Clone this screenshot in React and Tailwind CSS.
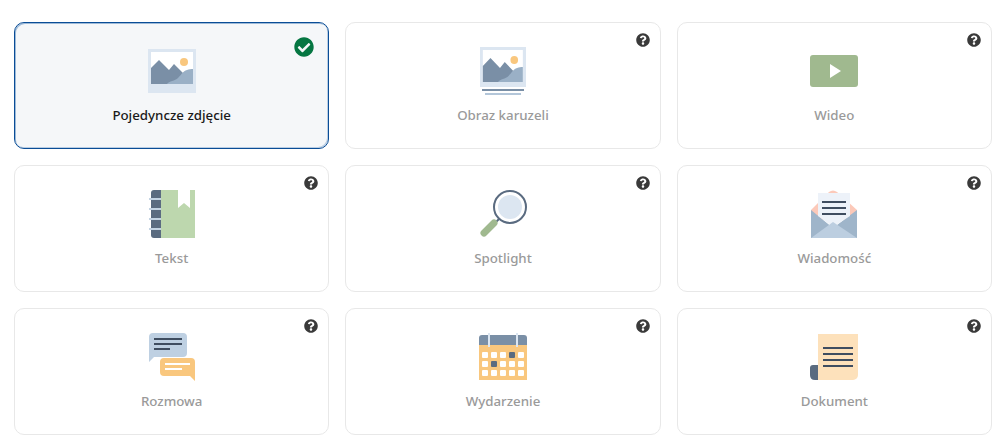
import React from "react";
import { FaCheckCircle, FaQuestionCircle } from "react-icons/fa";

const SLATE = "#5a6b80";
const INK = "#3f4d60";
const MIST = "#dce6f1";
const ORANGE = "#f9c77e";

const Landscape = () => (
  <>
    <rect x="3" y="5" width="42" height="32" fill="#fff" />
    <circle cx="36" cy="15" r="4" fill={ORANGE} />
    <path d="M3 21 L11 13 L21 23 L26 17 L36 27 L36 37 L3 37 Z" fill="#7a8fa6" />
    <path d="M19 37 C21 34 27 34 30 31 C33 28 35 24 39 23 C41 22 43 22 45 22 L45 37 Z" fill="#9ab0c6" />
  </>
);

const ImageIcon = () => (
  <svg width="48" height="48" viewBox="0 0 48 48">
    <rect x="0" y="2" width="48" height="44" fill={MIST} />
    <Landscape />
  </svg>
);

const CarouselIcon = () => (
  <svg width="48" height="48" viewBox="0 0 48 48">
    <rect x="1" y="0" width="46" height="40" fill={MIST} />
    <g transform="translate(1 -2) scale(0.952 1)">
      <Landscape />
    </g>
    <rect x="3" y="42" width="42" height="2" fill="#7a8fa6" />
    <rect x="6" y="46" width="36" height="2" fill="#b3c6d9" />
  </svg>
);

const VideoIcon = () => (
  <svg width="48" height="48" viewBox="0 0 48 48">
    <rect x="0" y="8" width="48" height="32" rx="3" fill="#a0b98f" />
    <path d="M20 17 L31 24 L20 31 Z" fill="#fff" />
  </svg>
);

const BookIcon = () => (
  <svg width="48" height="48" viewBox="0 0 48 48">
    <path d="M13 0 H47 V48 H13 Z" fill="#bdd7ae" />
    <path d="M30 0 H42 V18 L36 13 L30 18 Z" fill="#fff" />
    <path d="M13 0 V48 H6 A3 3 0 0 1 3 45 V3 A3 3 0 0 1 6 0 Z" fill={SLATE} />
    {[9, 19, 29, 39].map((y) => (
      <rect key={y} x="1" y={y - 1} width="12" height="2" fill="#c3d3e3" />
    ))}
  </svg>
);

const SearchIcon = () => (
  <svg width="48" height="48" viewBox="0 0 48 48">
    <circle cx="31" cy="17" r="16" fill="#fff" stroke={SLATE} strokeWidth="2" />
    <circle cx="31" cy="17" r="12" fill={MIST} />
    <path d="M20 29 L16 33" stroke={SLATE} strokeWidth="2" />
    <path d="M15 33 L5 43" stroke="#a0b98f" strokeWidth="7" strokeLinecap="round" />
  </svg>
);

const MailIcon = () => (
  <svg width="48" height="48" viewBox="0 0 48 48">
    <path d="M1 20 L19 2 Q23 -1 27 2 L47 20 L47 30 L1 30 Z" fill="#fcc9b9" />
    <path d="M1 20 L23 38 L47 20 V48 H1 Z" fill="#9fb5ca" />
    <path d="M8 3 H40 V26 L23 37 L8 26 Z" fill="#edf2f9" />
    {[12, 18, 24].map((y) => (
      <rect key={y} x="12" y={y - 1} width="24" height="2" fill={INK} />
    ))}
    <path d="M1 48 L23 32 L47 48 Z" fill="#bccee0" />
  </svg>
);

const ChatIcon = () => (
  <svg width="48" height="48" viewBox="0 0 48 48">
    <path d="M5 0 H35 A4 4 0 0 1 39 4 V20 A4 4 0 0 1 35 24 H6 L1 29 V4 A4 4 0 0 1 5 0 Z" fill="#bed0e2" />
    <rect x="6" y="5" width="28" height="2" fill={INK} />
    <rect x="6" y="10" width="28" height="2" fill={INK} />
    <rect x="6" y="15" width="16" height="2" fill={INK} />
    <path d="M16 25 H43 A4 4 0 0 1 47 29 V48 L42 43 H16 A4 4 0 0 1 12 39 V29 A4 4 0 0 1 16 25 Z" fill={ORANGE} />
    <rect x="17" y="30" width="25" height="2" fill="#fff" />
    <rect x="17" y="35" width="17" height="2" fill="#fff" />
  </svg>
);

const CalendarIcon = () => {
  const dark = ["3-0", "1-1"];
  return (
    <svg width="48" height="48" viewBox="0 0 48 48">
      <path d="M0 12 V5 A3 3 0 0 1 3 2 H45 A3 3 0 0 1 48 5 V12 Z" fill="#7a8fa6" />
      <rect x="0" y="12" width="48" height="35" fill={ORANGE} />
      <rect x="9" y="0" width="2" height="14" fill={MIST} />
      <rect x="37" y="0" width="2" height="14" fill={MIST} />
      {[0, 1, 2].map((r) =>
        [0, 1, 2, 3, 4].map((c) => (
          <rect
            key={`${c}-${r}`}
            x={3 + c * 9}
            y={19 + r * 9}
            width="6"
            height="6"
            rx="1"
            fill={dark.includes(`${c}-${r}`) ? SLATE : "#fff"}
          />
        ))
      )}
    </svg>
  );
};

const DocumentIcon = () => (
  <svg width="48" height="48" viewBox="0 0 48 48">
    <path d="M3 32 H10 V47 H5 Q0 47 0 42 V35 Q0 32 3 32 Z" fill={SLATE} />
    <path d="M8 1 H48 V42 A5 5 0 0 1 43 47 H8 Z" fill="#fde1bb" />
    {[15, 21, 27, 33].map((y) => (
      <rect key={y} x="13" y={y - 1} width="30" height="2" fill={INK} />
    ))}
  </svg>
);

const postTypes = [
  { label: "Pojedyncze zdjęcie", Icon: ImageIcon, selected: true },
  { label: "Obraz karuzeli", Icon: CarouselIcon },
  { label: "Wideo", Icon: VideoIcon },
  { label: "Tekst", Icon: BookIcon },
  { label: "Spotlight", Icon: SearchIcon },
  { label: "Wiadomość", Icon: MailIcon },
  { label: "Rozmowa", Icon: ChatIcon },
  { label: "Wydarzenie", Icon: CalendarIcon },
  { label: "Dokument", Icon: DocumentIcon },
];

const TypeCard = ({ label, Icon, selected }) => (
  <div
    className={
      selected
        ? "relative h-[127px] rounded-[10px] border border-[#0a4d96] bg-[#f5f7f9] pt-[24px] flex flex-col items-center shadow-[inset_-1px_-1px_0_#b9cde3,inset_1px_1px_0_#9dbad8]"
        : "relative h-[127px] rounded-[10px] border border-[#e8e8e8] bg-white pt-[24px] flex flex-col items-center"
    }
  >
    {selected ? (
      <FaCheckCircle size={20} className="absolute top-[14px] right-[14px] text-[#057642]" />
    ) : (
      <FaQuestionCircle size={14} className="absolute top-[10px] right-[10px] text-[#3a3a3a]" />
    )}
    <Icon />
    <p
      className={
        selected
          ? "mt-[10px] text-[13.3px] leading-5 font-medium text-[#1a1a1a]"
          : "mt-[10px] text-[13.3px] leading-5 font-medium text-[#9a9a9a]"
      }
    >
      {label}
    </p>
  </div>
);

export default function App() {
  return (
    <div
      className="w-[1007px] h-[448px] bg-white pt-[22px] pl-[14px] pr-[15px] overflow-hidden"
      style={{ fontFamily: "'Noto Sans', sans-serif" }}
    >
      <div className="grid grid-cols-3 gap-4">
        {postTypes.map((t) => (
          <TypeCard key={t.label} {...t} />
        ))}
      </div>
    </div>
  );
}
